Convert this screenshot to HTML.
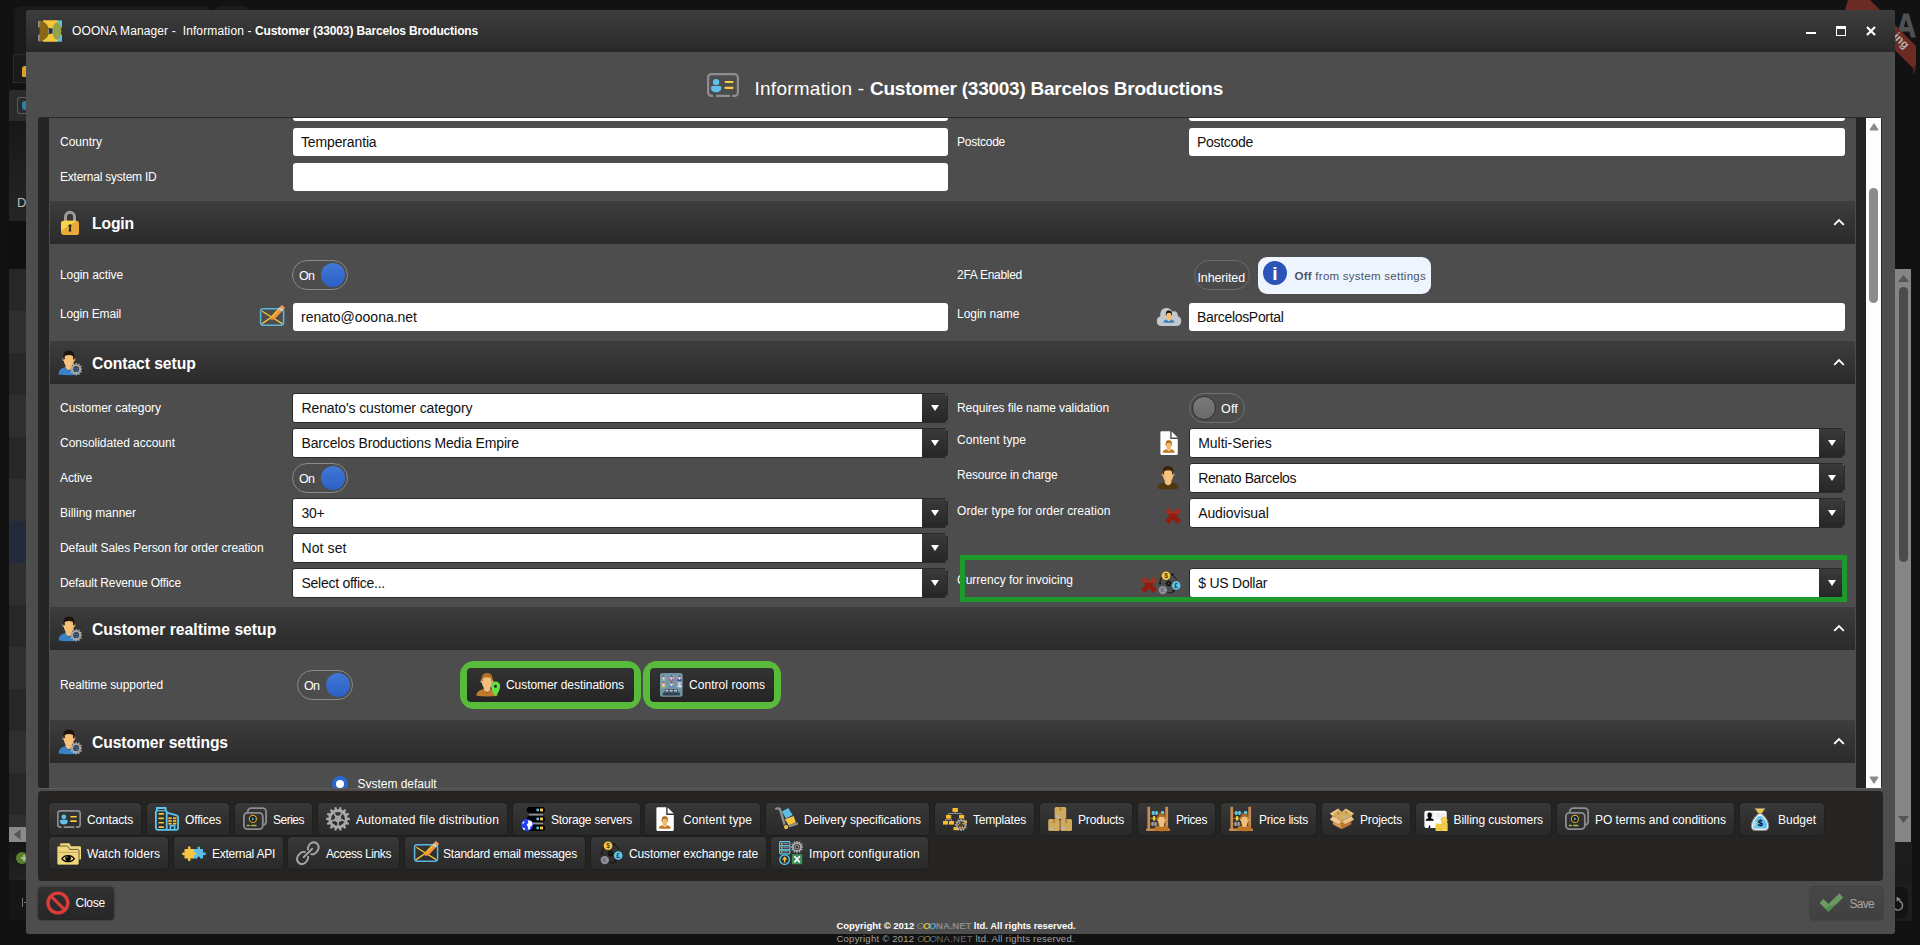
<!DOCTYPE html>
<html lang="en"><head><meta charset="utf-8"><title>OOONA Manager - Information - Customer (33003) Barcelos Broductions</title>
<style>
html,body{margin:0;padding:0;}
body{width:1920px;height:945px;overflow:hidden;background:#131313;font-family:"Liberation Sans", sans-serif;color:#fff;position:relative;}
body div, body svg{position:absolute;box-sizing:border-box;}
.t{white-space:pre;line-height:1;}

.hdr{background:linear-gradient(#3d3d3d,#2a2a2a);}
.inp{background:#fff;border-radius:3px;}
.dd{background:#fff;border-radius:3px;border:1px solid #2b2b2b;overflow:hidden;}
.dd i{position:absolute;right:0;top:0;bottom:0;width:25px;background:linear-gradient(#3a3a3a,#262626);}
.dd i:after{content:"";position:absolute;left:9px;top:11px;border-left:4px solid transparent;border-right:4px solid transparent;border-top:6px solid #fff;}
.tg{border:1px solid #8a8a8a;border-radius:15px;background:#4c4c4c;}
.tb{background:linear-gradient(#383838,#292929);border-radius:4px;box-shadow:0 0 2px rgba(0,0,0,.5);}

</style></head><body>
<div style="left:0px;top:0px;width:1920px;height:945px;background:#121212;"></div>
<div style="left:14px;top:6px;width:197px;height:48px;background:#1a1a1a;border-radius:7px 7px 0 0;"></div>
<div style="left:214px;top:6px;width:36px;height:12px;background:#1b1b1b;border-radius:7px 7px 0 0;"></div>
<div style="left:13px;top:54px;width:14px;height:29px;background:#1b1b1b;border:1px solid #2a2a2a;"></div>
<div style="left:22px;top:66px;width:5px;height:11px;background:#d9a32b;border-radius:3px 0 0 1px;"></div>
<div style="left:9px;top:90px;width:18px;height:31px;background:#2b2b2b;border-radius:3px 0 0 0;"></div>
<div style="left:17px;top:97px;width:10px;height:17px;border:1.5px solid #5c5c5c;border-right:none;border-radius:3px 0 0 3px;"></div>
<div style="left:22px;top:101px;width:5px;height:9px;background:#2f7ea3;border-radius:3px 0 0 3px;"></div>
<div style="left:9px;top:121px;width:18px;height:100px;background:linear-gradient(#181818,#252525);"></div>
<div class="t" style="left:17px;top:196.00px;font-size:13px;color:#bbb;">D</div>
<div style="left:9px;top:221px;width:18px;height:48px;background:#101010;"></div>
<div style="left:9px;top:269px;width:18px;height:42px;background:#272727;"></div>
<div style="left:9px;top:311px;width:18px;height:42px;background:#2f2f2f;"></div>
<div style="left:9px;top:353px;width:18px;height:42px;background:#272727;"></div>
<div style="left:9px;top:395px;width:18px;height:42px;background:#2f2f2f;"></div>
<div style="left:9px;top:437px;width:18px;height:42px;background:#272727;"></div>
<div style="left:9px;top:479px;width:18px;height:42px;background:#2f2f2f;"></div>
<div style="left:9px;top:521px;width:18px;height:42px;background:#232a3a;"></div>
<div style="left:9px;top:563px;width:18px;height:42px;background:#2f2f2f;"></div>
<div style="left:9px;top:605px;width:18px;height:42px;background:#272727;"></div>
<div style="left:9px;top:647px;width:18px;height:42px;background:#2f2f2f;"></div>
<div style="left:9px;top:689px;width:18px;height:42px;background:#272727;"></div>
<div style="left:9px;top:731px;width:18px;height:42px;background:#2f2f2f;"></div>
<div style="left:9px;top:773px;width:18px;height:42px;background:#272727;"></div>
<div style="left:9px;top:815px;width:18px;height:12px;background:#2f2f2f;"></div>
<div style="left:9px;top:827px;width:17px;height:15px;background:#8a8a8a;"></div>
<svg style="left:13px;top:829px" width="8" height="11"><path d="M7.5 0.5L0.8 5.5L7.5 10.5Z" fill="#555"/></svg>
<div style="left:9px;top:842px;width:18px;height:38px;background:linear-gradient(#151515,#222);"></div>
<div style="left:16px;top:852px;width:12px;height:12px;background:#5c7f2c;border-radius:6px;"></div>
<div style="left:21px;top:857.2px;width:6px;height:1.6px;background:#a9b99a;"></div>
<div style="left:23.2px;top:855px;width:1.6px;height:6px;background:#a9b99a;"></div>
<div style="left:9px;top:880px;width:18px;height:40px;background:#161616;"></div>
<div style="left:22px;top:898px;width:1.2px;height:9px;background:#777;"></div>
<div style="left:23.5px;top:902px;width:3px;height:1.2px;background:#777;"></div>
<div style="left:0px;top:934px;width:1920px;height:11px;background:#121212;"></div>
<div class="t" style="left:1895.5px;top:8.87px;font-size:33px;font-weight:700;color:#4f5153;-webkit-text-stroke:0.9px #4f5153;transform:scaleX(0.84);transform-origin:0 0;">A</div>
<svg style="left:1840px;top:0" width="80" height="80"><path d="M8 0H30L76 46V70L73 74V68.3L15 10H5Z" fill="#6b2b22"/><path d="M73 68.3L76 64V70L73 74Z" fill="#4f1d16"/></svg>
<div class="t" style="left:1892px;top:28.27px;font-size:11.5px;font-weight:700;color:#b4b4b4;transform:rotate(45deg);transform-origin:0 84.65%;">ing</div>
<div style="left:1895.3px;top:269px;width:15.5px;height:573px;background:#858585;"></div>
<div style="left:1898.6px;top:287px;width:9px;height:275px;background:#4b4b4b;border-radius:5px;"></div>
<svg style="left:1897.6px;top:275px" width="11" height="7"><path d="M0 7L5.5 0L11 7Z" fill="#555"/></svg>
<svg style="left:1897.6px;top:816px" width="11" height="7"><path d="M0 0L5.5 7L11 0Z" fill="#555"/></svg>
<div style="left:1894px;top:842px;width:17.5px;height:79px;background:linear-gradient(#1e1e1e,#171717);"></div>
<div style="left:1894px;top:882px;width:17.5px;height:39px;background:#1d1d1d;"></div>
<div style="left:1894px;top:887px;width:14px;height:31px;background:#131313;border-radius:0 6px 6px 0;"></div>
<svg style="left:1890px;top:892px" width="20" height="22" viewBox="0 0 20 22"><path d="M9 9A4.6 4.6 0 1 1 3.6 12" fill="none" stroke="#8c8c8c" stroke-width="1.4"/><path d="M6.6 4.8V9.6L11 7.2Z" fill="#8c8c8c"/></svg>
<div style="left:25.5px;top:10.3px;width:1869px;height:923.7px;background:#4d4d4d;border-radius:3px;"></div>
<div style="left:25.5px;top:10.3px;width:1869px;height:41.7px;background:linear-gradient(#3d3d3d,#292929);border-radius:3px 3px 0 0;"></div>
<svg style="left:38px;top:20px" width="24" height="22" viewBox="0 0 24 22"><rect x="0" y="1" width="4" height="6.5" fill="#8b8d92"/><rect x="0" y="14.5" width="5.5" height="6.7" fill="#8b8d92"/><rect x="17.5" y="0.4" width="6.5" height="7.2" fill="#56c1ea"/><rect x="17.5" y="14.4" width="6.5" height="7.2" fill="#56c1ea"/><path d="M5 0.3H19Q22.5 5 22.8 11Q22.5 17 19 21.7H5Z" fill="#f6c63f"/><path d="M1.6 0.3Q11 3 11.2 11Q11 19 1.6 21.7Z" fill="#8a6914"/><path d="M14.6 7.6Q12.2 11 14.6 14.4Q16 11 14.6 7.6Z" fill="#56c1ea"/><ellipse cx="18.9" cy="11" rx="4.4" ry="8.8" fill="#95a349"/><rect x="9.4" y="8.2" width="5" height="5.6" rx="1" fill="#2e2e2e"/><rect x="9.4" y="8.6" width="1.6" height="4.8" fill="#8b8d92"/></svg>
<div class="t" style="left:72px;top:24.64px;font-size:12px;letter-spacing:0.116px;">OOONA Manager -  Information - </div>
<div class="t" style="left:255px;top:24.64px;font-size:12px;font-weight:700;letter-spacing:-0.155px;">Customer (33003) Barcelos Broductions</div>
<div style="left:1806px;top:31.7px;width:10px;height:2.6px;background:#fff;"></div>
<div style="left:1836px;top:26px;width:10px;height:10px;border:1px solid #fff;border-top:3px solid #fff;"></div>
<svg style="left:1866px;top:26px" width="10" height="10"><path d="M1 1L9 9M9 1L1 9" stroke="#fff" stroke-width="2.2"/></svg>
<svg style="left:707px;top:73px" width="32" height="24" viewBox="0 0 32 24"><path d="M6 22.9H4.6A3.5 3.5 0 0 1 1.1 19.4V4.6A3.5 3.5 0 0 1 4.6 1.1H27.4A3.5 3.5 0 0 1 30.9 4.6V19.4A3.5 3.5 0 0 1 27.4 22.9H25.2M23 22.9H9" fill="none" stroke="#8d8e93" stroke-width="2.2"/><circle cx="9.1" cy="9.1" r="3.2" fill="#5fc1e8"/><path d="M3.9 14.6Q3.9 13 5.5 13H12.7Q14.3 13 14.3 14.6Q14.3 19.3 9.1 19.3Q3.9 19.3 3.9 14.6Z" fill="#5fc1e8"/><rect x="17.8" y="7.9" width="8.5" height="2.2" rx="0.4" fill="#fccb45"/><rect x="17.8" y="13.8" width="8.5" height="2.2" rx="0.4" fill="#fccb45"/></svg>
<div class="t" style="left:754.5px;top:78.92px;font-size:19px;letter-spacing:0.254px;">Information - </div>
<div class="t" style="left:870px;top:78.92px;font-size:19px;font-weight:700;letter-spacing:-0.248px;">Customer (33003) Barcelos Broductions</div>
<div style="left:38px;top:117px;width:1844px;height:671px;background:#2a2a2a;border-radius:3px;"></div>
<div style="left:38px;top:117.7px;width:11px;height:670.3px;background:#272524;border-radius:3px 0 0 3px;"></div>
<div style="left:49px;top:117.7px;width:1807px;height:670.3px;background:#4d4d4d;"></div>
<div style="left:1856px;top:117.7px;width:9.8px;height:670.3px;background:#252423;"></div>
<div style="left:1865.7px;top:117.7px;width:15.5px;height:670.3px;background:#fdfdfd;"></div>
<div style="left:1869.3px;top:188px;width:8.6px;height:115px;background:#8c8c8c;border-radius:4.3px;"></div>
<svg style="left:1868.5px;top:122.5px" width="10" height="8" viewBox="0 0 10 8"><path d="M1.3 6.8L5 1.2L8.7 6.8Z" fill="#8a8a8a" stroke="#8a8a8a" stroke-width="1.4" stroke-linejoin="round"/></svg>
<svg style="left:1868.5px;top:775.5px" width="10" height="8" viewBox="0 0 10 8"><path d="M1.3 1.2L5 6.8L8.7 1.2Z" fill="#8a8a8a" stroke="#8a8a8a" stroke-width="1.4" stroke-linejoin="round"/></svg>
<div style="left:293px;top:118px;width:655px;height:3px;background:#fff;border-radius:0 0 3px 3px;"></div>
<div style="left:1189px;top:118px;width:656px;height:3px;background:#fff;border-radius:0 0 3px 3px;"></div>
<div class="t" style="left:60px;top:136.04px;font-size:12px;letter-spacing:-0.004px;">Country</div>
<div style="left:293px;top:128px;width:655px;height:28px;background:#fff;border-radius:3px;"></div>
<div class="t" style="left:301px;top:134.75px;font-size:14px;color:#111;letter-spacing:-0.141px;">Temperantia</div>
<div class="t" style="left:957px;top:136.04px;font-size:12px;letter-spacing:-0.256px;">Postcode</div>
<div style="left:1189px;top:128px;width:656px;height:28px;background:#fff;border-radius:3px;"></div>
<div class="t" style="left:1197px;top:134.75px;font-size:14px;color:#111;letter-spacing:-0.297px;">Postcode</div>
<div class="t" style="left:60px;top:170.54px;font-size:12px;letter-spacing:-0.234px;">External system ID</div>
<div style="left:293px;top:163px;width:655px;height:28px;background:#fff;border-radius:3px;"></div>
<div class="hdr" style="left:50px;top:201px;width:1805px;height:43px"></div>
<svg style="left:58px;top:209px" width="24" height="28" viewBox="0 0 24 28"><path d="M7.5 13V7.8A4.5 4.5 0 0 1 16.5 7.8V13" fill="none" stroke="#9b9b9b" stroke-width="3"/><rect x="3" y="11.8" width="18" height="14.3" rx="3" fill="#eba937"/><path d="M3 21.5V14.8A3 3 0 0 1 6 11.8H18.5Z" fill="#f6d549"/><path d="M5.5 26.1H18A3 3 0 0 0 21 23.1V15Z" fill="#eba937"/><circle cx="12" cy="16.8" r="1.6" fill="#2d2a22"/><path d="M11.3 17H12.7L13.3 22.6H10.7Z" fill="#2d2a22"/></svg>
<div class="t" style="left:92px;top:215.81px;font-size:15.7px;font-weight:700;letter-spacing:-0.141px;">Login</div>
<svg style="left:1833px;top:218px" width="12" height="8" viewBox="0 0 12 8"><path d="M1.2 6.8L6 2L10.8 6.8" fill="none" stroke="#fff" stroke-width="1.9"/></svg>
<div class="t" style="left:60px;top:268.54px;font-size:12px;letter-spacing:-0.087px;">Login active</div>
<div class="tg" style="left:292px;top:260px;width:56px;height:30px"></div>
<div style="left:321px;top:263px;width:24px;height:24px;background:linear-gradient(#4079d4,#2b5fc6);border-radius:12px;"></div>
<div class="t" style="left:299px;top:269.62px;font-size:12.5px;letter-spacing:-0.844px;">On</div>
<div class="t" style="left:957px;top:268.54px;font-size:12px;letter-spacing:-0.278px;">2FA Enabled</div>
<div class="tg" style="left:1194px;top:260px;width:56px;height:30px;background:#4a4a4a;border-color:#6c6c6c"></div>
<div class="t" style="left:1197.5px;top:272.22px;font-size:12.5px;letter-spacing:-0.128px;">Inherited</div>
<div style="left:1258px;top:257px;width:173px;height:37px;background:#eff5fe;border-radius:9px;"></div>
<div style="left:1263px;top:261px;width:24px;height:24px;background:#2b54b9;border-radius:12px;"></div>
<div class="t" style="left:1272.3px;top:263.92px;font-size:19px;font-weight:700;">i</div>
<div class="t" style="left:1294.5px;top:270.97px;font-size:11.5px;color:#4a5368;letter-spacing:0.260px;"><b>Off</b> from system settings</div>
<div class="t" style="left:60px;top:308.04px;font-size:12px;letter-spacing:-0.155px;">Login Email</div>
<svg style="left:259px;top:304px" width="26" height="22" viewBox="0 0 26 22"><rect x="1.6" y="4.8" width="23" height="16.4" rx="2.6" fill="none" stroke="#5bb5da" stroke-width="1.6"/><path d="M3.2 7.2L23.2 19.6M3.2 19.6L12.2 13.4" fill="none" stroke="#f1c232" stroke-width="1.35"/><path d="M11.9 15.9L12.27 12.13L19.22 4.68L22.58 7.82L15.63 15.27Z" fill="#f5913a"/><path d="M12.27 12.13L19.22 4.68L20.4 5.78L13.45 13.23Z" fill="#efc22f"/><path d="M19.22 4.68L21.12 2.63L24.48 5.77L22.58 7.82Z" fill="#cfcfcf"/><path d="M21.12 2.63L22.1 1.6Q22.9 0.9 23.7 1.6L25.5 3.3Q26.2 4.1 25.5 4.8L24.48 5.77Z" fill="#f79a4a"/></svg>
<div style="left:293px;top:303px;width:655px;height:28px;background:#fff;border-radius:3px;"></div>
<div class="t" style="left:301px;top:309.75px;font-size:14px;color:#111;letter-spacing:-0.013px;">renato@ooona.net</div>
<div class="t" style="left:957px;top:308.04px;font-size:12px;letter-spacing:-0.022px;">Login name</div>
<svg style="left:1156px;top:307px" width="26" height="20" viewBox="0 0 26 20"><path d="M5.6 19Q0.8 19 0.8 14.2Q0.8 10.4 4.2 9.6Q3.6 0.9 10.5 0.9Q14.6 0.9 16 4.6Q21.6 2.6 22 9.2Q25.2 10 25.2 14.2Q25.2 19 20.4 19Z" fill="#c4c8cc"/><path fill="#3a82c8" d="M7.3 15.6Q7.3 13.37 10.55 12.53L12.9 14.54L15.25 12.53Q18.5 13.37 18.5 15.6Q12.9 16.5 7.3 15.6Z"/><path fill="#f4c07c" d="M11.05 10.12H14.75V12.86Q12.9 15.44 11.05 12.86Z"/><ellipse cx="9.99" cy="8.05" rx="0.62" ry="1.06" fill="#f4c07c"/><ellipse cx="15.81" cy="8.05" rx="0.62" ry="1.06" fill="#f4c07c"/><path fill="#f4c07c" d="M10.1 5.64H15.7V8.44Q15.7 10.96 14.02 12.08H11.78Q10.1 10.96 10.1 8.44Z"/><path fill="#17110b" d="M9.82 8.44Q9.26 3.34 12.9 3.4Q16.54 3.34 15.98 8.44L15.14 7.99L15.2 6.42Q12.9 5.25 10.6 6.42L10.66 7.99Z"/></svg>
<div style="left:1189px;top:303px;width:656px;height:28px;background:#fff;border-radius:3px;"></div>
<div class="t" style="left:1197px;top:309.75px;font-size:14px;color:#111;letter-spacing:-0.325px;">BarcelosPortal</div>
<div class="hdr" style="left:50px;top:341px;width:1805px;height:43px"></div>
<svg style="left:58px;top:349px" width="24" height="28" viewBox="0 0 24 28"><path fill="#3a82c8" d="M0.6 25.4Q0.6 19.76 6.62 18.23L10.9 21.9L15.18 18.23Q21.2 19.76 21.2 25.4Q10.9 27.03 0.6 25.4Z"/><path fill="#f4c07c" d="M7.53 13.84H14.27V18.84Q10.9 23.53 7.53 18.84Z"/><ellipse cx="5.6" cy="10.07" rx="1.12" ry="1.94" fill="#f4c07c"/><ellipse cx="16.2" cy="10.07" rx="1.12" ry="1.94" fill="#f4c07c"/><path fill="#f4c07c" d="M5.8 5.68H16V10.78Q16 15.37 12.94 17.41H8.86Q5.8 15.37 5.8 10.78Z"/><path fill="#1c140d" d="M5.29 10.78Q4.27 1.5 10.9 1.6Q17.53 1.5 16.51 10.78L14.98 9.96L15.08 7.11Q10.9 4.97 6.72 7.11L6.82 9.96Z"/><path fill-rule="evenodd" fill="#a9a9a9" d="M23.05 19.47 L24.47 19.57 L24.47 20.83 L23.05 20.93 L22.76 21.99 L23.94 22.79 L23.31 23.88 L22.03 23.26 L21.26 24.03 L21.88 25.31 L20.79 25.94 L19.99 24.76 L18.93 25.05 L18.83 26.47 L17.57 26.47 L17.47 25.05 L16.41 24.76 L15.61 25.94 L14.52 25.31 L15.14 24.03 L14.37 23.26 L13.09 23.88 L12.46 22.79 L13.64 21.99 L13.35 20.93 L11.93 20.83 L11.93 19.57 L13.35 19.47 L13.64 18.41 L12.46 17.61 L13.09 16.52 L14.37 17.14 L15.14 16.37 L14.52 15.09 L15.61 14.46 L16.41 15.64 L17.47 15.35 L17.57 13.93 L18.83 13.93 L18.93 15.35 L19.99 15.64 L20.79 14.46 L21.88 15.09 L21.26 16.37 L22.03 17.14 L23.31 16.52 L23.94 17.61 L22.76 18.41ZM15.3 20.2a2.9 2.9 0 1 0 5.8 0a2.9 2.9 0 1 0 -5.8 0Z"/><circle cx="18.2" cy="20.2" r="2.9" fill="#3a3f46"/><circle cx="17" cy="19.2" r="0.8" fill="#3a82c8"/><circle cx="19.5" cy="19.4" r="0.8" fill="#3a82c8"/><circle cx="18" cy="21.6" r="0.8" fill="#3a82c8"/><circle cx="19.8" cy="21.4" r="0.7" fill="#3a82c8"/></svg>
<div class="t" style="left:92px;top:355.81px;font-size:15.7px;font-weight:700;letter-spacing:-0.069px;">Contact setup</div>
<svg style="left:1833px;top:358px" width="12" height="8" viewBox="0 0 12 8"><path d="M1.2 6.8L6 2L10.8 6.8" fill="none" stroke="#fff" stroke-width="1.9"/></svg>
<div class="t" style="left:60px;top:401.54px;font-size:12px;letter-spacing:-0.022px;">Customer category</div>
<div class="dd" style="left:292px;top:393.0px;width:656.4px;height:29.5px"><i></i></div>
<div class="t" style="left:301.5px;top:400.75px;font-size:14px;color:#111;letter-spacing:-0.111px;">Renato's customer category</div>
<div class="t" style="left:60px;top:436.54px;font-size:12px;letter-spacing:-0.021px;">Consolidated account</div>
<div class="dd" style="left:292px;top:428.0px;width:656.4px;height:29.5px"><i></i></div>
<div class="t" style="left:301.5px;top:435.75px;font-size:14px;color:#111;letter-spacing:-0.153px;">Barcelos Broductions Media Empire</div>
<div class="t" style="left:60px;top:471.54px;font-size:12px;letter-spacing:-0.115px;">Active</div>
<div class="tg" style="left:292px;top:463px;width:56px;height:30px"></div>
<div style="left:321px;top:466px;width:24px;height:24px;background:linear-gradient(#4079d4,#2b5fc6);border-radius:12px;"></div>
<div class="t" style="left:299px;top:472.62px;font-size:12.5px;letter-spacing:-0.844px;">On</div>
<div class="t" style="left:60px;top:506.54px;font-size:12px;letter-spacing:-0.003px;">Billing manner</div>
<div class="dd" style="left:292px;top:498.0px;width:656.4px;height:29.5px"><i></i></div>
<div class="t" style="left:301.5px;top:505.75px;font-size:14px;color:#111;letter-spacing:-0.250px;">30+</div>
<div class="t" style="left:60px;top:541.54px;font-size:12px;letter-spacing:-0.101px;">Default Sales Person for order creation</div>
<div class="dd" style="left:292px;top:533.0px;width:656.4px;height:29.5px"><i></i></div>
<div class="t" style="left:301.5px;top:540.75px;font-size:14px;color:#111;letter-spacing:0.092px;">Not set</div>
<div class="t" style="left:60px;top:576.54px;font-size:12px;letter-spacing:-0.130px;">Default Revenue Office</div>
<div class="dd" style="left:292px;top:568.0px;width:656.4px;height:29.5px"><i></i></div>
<div class="t" style="left:301.5px;top:575.75px;font-size:14px;color:#111;letter-spacing:-0.262px;">Select office...</div>
<div class="t" style="left:957px;top:401.54px;font-size:12px;letter-spacing:-0.072px;">Requires file name validation</div>
<div class="tg" style="left:1189px;top:393px;width:56px;height:30px;border-color:#727272"></div>
<div style="left:1192px;top:396px;width:24px;height:24px;background:linear-gradient(#7a7a7a,#6a6a6a);border-radius:12px;border:1px solid #323232;"></div>
<div class="t" style="left:1221px;top:402.72px;font-size:12.5px;letter-spacing:0.182px;">Off</div>
<div class="t" style="left:957px;top:433.54px;font-size:12px;letter-spacing:0.079px;">Content type</div>
<svg style="left:1160px;top:431px" width="18" height="24" viewBox="0 0 18 24"><path d="M0.4 1.4Q0.4 0.3 1.5 0.3H10.2V7.9H17.8V22.8Q17.8 23.9 16.7 23.9H1.5Q0.4 23.9 0.4 22.8Z" fill="#fff"/><path d="M11.6 0.4L17.7 6.6H11.6Z" fill="#fff"/><path fill="#c17623" d="M2.8 21.4Q2.8 19.17 6.45 18.33L8.8 20.34L11.15 18.33Q14.8 19.17 14.8 21.4Q8.8 22.3 2.8 21.4Z"/><path fill="#f2ba70" d="M6.95 15.92H10.65V18.66Q8.8 21.24 6.95 18.66Z"/><ellipse cx="5.89" cy="13.85" rx="0.62" ry="1.06" fill="#f2ba70"/><ellipse cx="11.71" cy="13.85" rx="0.62" ry="1.06" fill="#f2ba70"/><path fill="#f2ba70" d="M6 11.44H11.6V14.24Q11.6 16.76 9.92 17.88H7.68Q6 16.76 6 14.24Z"/><path fill="#a9681f" d="M5.72 14.24Q5.16 9.14 8.8 9.2Q12.44 9.14 11.88 14.24L11.04 13.79L11.1 12.22Q8.8 11.05 6.5 12.22L6.56 13.79Z"/></svg>
<div class="dd" style="left:1188.7px;top:428.0px;width:656.3px;height:29.5px"><i></i></div>
<div class="t" style="left:1198.2px;top:435.75px;font-size:14px;color:#111;letter-spacing:-0.034px;">Multi-Series</div>
<div class="t" style="left:957px;top:468.54px;font-size:12px;letter-spacing:-0.198px;">Resource in charge</div>
<svg style="left:1157px;top:465px" width="24" height="26" viewBox="0 0 24 26"><path fill="#4f370f" d="M0.5 23.6Q0.5 18.8 6.9 17.3L11.1 20.9L15.3 17.3Q21.7 18.8 21.7 23.6Q11.1 25.2 0.5 23.6Z"/><path fill="#f4c07c" d="M7.8 13H14.4V17.9Q11.1 22.5 7.8 17.9Z"/><ellipse cx="5.9" cy="9.3" rx="1.1" ry="1.9" fill="#f4c07c"/><ellipse cx="16.3" cy="9.3" rx="1.1" ry="1.9" fill="#f4c07c"/><path fill="#f4c07c" d="M6.1 5H16.1V10Q16.1 14.5 13.1 16.5H9.1Q6.1 14.5 6.1 10Z"/><path fill="#3a2308" d="M5.6 10Q4.6 0.9 11.1 1Q17.6 0.9 16.6 10L15.1 9.2L15.2 6.4Q11.1 4.3 7 6.4L7.1 9.2Z"/></svg>
<div class="dd" style="left:1188.7px;top:463.0px;width:656.3px;height:29.5px"><i></i></div>
<div class="t" style="left:1198.2px;top:470.75px;font-size:14px;color:#111;letter-spacing:-0.368px;">Renato Barcelos</div>
<div class="t" style="left:957px;top:505.14px;font-size:12px;letter-spacing:0.072px;">Order type for order creation</div>
<svg style="left:1165px;top:508px" width="16" height="16" viewBox="0 0 16 16"><path d="M3.6 0L8 4.4L12.4 0L16 3.6L11.6 8L16 12.4L12.4 16L8 11.6L3.6 16L0 12.4L4.4 8L0 3.6Z" fill="#931b10"/><path d="M3.6 0L8 4.4L12.4 0L16 3.6L13.4 6.2Q7 5 2.6 6.2L0 3.6Z" fill="#a03125"/></svg>
<div class="dd" style="left:1188.7px;top:498.0px;width:656.3px;height:29.5px"><i></i></div>
<div class="t" style="left:1198.2px;top:505.75px;font-size:14px;color:#111;letter-spacing:-0.101px;">Audiovisual</div>
<div class="t" style="left:957px;top:573.54px;font-size:12px;letter-spacing:-0.002px;">Currency for invoicing</div>
<svg style="left:1141px;top:577px" width="16" height="16" viewBox="0 0 16 16"><path d="M3.6 0L8 4.4L12.4 0L16 3.6L11.6 8L16 12.4L12.4 16L8 11.6L3.6 16L0 12.4L4.4 8L0 3.6Z" fill="#931b10"/><path d="M3.6 0L8 4.4L12.4 0L16 3.6L13.4 6.2Q7 5 2.6 6.2L0 3.6Z" fill="#a03125"/></svg>
<svg style="left:1158px;top:571px" width="24" height="24" viewBox="0 0 24 24"><path d="M4.2 5.6Q1.6 8.6 1.9 12.4" fill="none" stroke="#111" stroke-width="0.9"/><path d="M0.6 11.6L3.3 11.9L2 14.2Z" fill="#111"/><path d="M13.8 3.6Q16.9 5.3 18.6 8.6" fill="none" stroke="#111" stroke-width="0.9"/><path d="M12.9 2.3L15.8 2.8L14 5.2Z" fill="#111"/><path d="M9.6 21.7Q13 22.6 15.6 20.4" fill="none" stroke="#111" stroke-width="0.9"/><path d="M14.3 18.7L17.1 19.6L15.7 22Z" fill="#111"/><path fill-rule="evenodd" fill="#0c0c0c" d="M12.84 11.99 L13.66 12.03 L13.66 12.97 L12.84 13.01 L12.55 13.72 L13.1 14.34 L12.44 15 L11.82 14.45 L11.11 14.74 L11.07 15.56 L10.13 15.56 L10.09 14.74 L9.38 14.45 L8.76 15 L8.1 14.34 L8.65 13.72 L8.36 13.01 L7.54 12.97 L7.54 12.03 L8.36 11.99 L8.65 11.28 L8.1 10.66 L8.76 10 L9.38 10.55 L10.09 10.26 L10.13 9.44 L11.07 9.44 L11.11 10.26 L11.82 10.55 L12.44 10 L13.1 10.66 L12.55 11.28ZM9.6 12.5a1 1 0 1 0 2 0a1 1 0 1 0 -2 0Z"/><circle cx="8" cy="4.7" r="4.3" fill="#fccb45"/><text x="8" y="7.1" font-size="6.6" font-weight="700" text-anchor="middle" fill="#4a3a08" font-family="Liberation Sans, sans-serif">$</text><circle cx="18.2" cy="14.5" r="4.3" fill="#62c6ef"/><text x="18.2" y="17" font-size="6.8" font-weight="700" text-anchor="middle" fill="#163848" font-family="Liberation Sans, sans-serif">£</text><circle cx="4.8" cy="19.1" r="4.2" fill="#8f9196"/><text x="4.6" y="21.3" font-size="6.2" font-weight="700" text-anchor="middle" fill="#63656a" font-family="Liberation Sans, sans-serif">€</text></svg>
<div class="dd" style="left:1188.7px;top:568.0px;width:656.3px;height:29.5px"><i></i></div>
<div class="t" style="left:1198.2px;top:575.75px;font-size:14px;color:#111;letter-spacing:-0.236px;">$ US Dollar</div>
<div style="left:960px;top:555px;width:887px;height:47px;border:5px solid #1e9a2d;"></div>
<div class="hdr" style="left:50px;top:607px;width:1805px;height:43px"></div>
<svg style="left:58px;top:615px" width="24" height="28" viewBox="0 0 24 28"><path fill="#3a82c8" d="M0.6 25.4Q0.6 19.76 6.62 18.23L10.9 21.9L15.18 18.23Q21.2 19.76 21.2 25.4Q10.9 27.03 0.6 25.4Z"/><path fill="#f4c07c" d="M7.53 13.84H14.27V18.84Q10.9 23.53 7.53 18.84Z"/><ellipse cx="5.6" cy="10.07" rx="1.12" ry="1.94" fill="#f4c07c"/><ellipse cx="16.2" cy="10.07" rx="1.12" ry="1.94" fill="#f4c07c"/><path fill="#f4c07c" d="M5.8 5.68H16V10.78Q16 15.37 12.94 17.41H8.86Q5.8 15.37 5.8 10.78Z"/><path fill="#1c140d" d="M5.29 10.78Q4.27 1.5 10.9 1.6Q17.53 1.5 16.51 10.78L14.98 9.96L15.08 7.11Q10.9 4.97 6.72 7.11L6.82 9.96Z"/><path fill-rule="evenodd" fill="#a9a9a9" d="M23.05 19.47 L24.47 19.57 L24.47 20.83 L23.05 20.93 L22.76 21.99 L23.94 22.79 L23.31 23.88 L22.03 23.26 L21.26 24.03 L21.88 25.31 L20.79 25.94 L19.99 24.76 L18.93 25.05 L18.83 26.47 L17.57 26.47 L17.47 25.05 L16.41 24.76 L15.61 25.94 L14.52 25.31 L15.14 24.03 L14.37 23.26 L13.09 23.88 L12.46 22.79 L13.64 21.99 L13.35 20.93 L11.93 20.83 L11.93 19.57 L13.35 19.47 L13.64 18.41 L12.46 17.61 L13.09 16.52 L14.37 17.14 L15.14 16.37 L14.52 15.09 L15.61 14.46 L16.41 15.64 L17.47 15.35 L17.57 13.93 L18.83 13.93 L18.93 15.35 L19.99 15.64 L20.79 14.46 L21.88 15.09 L21.26 16.37 L22.03 17.14 L23.31 16.52 L23.94 17.61 L22.76 18.41ZM15.3 20.2a2.9 2.9 0 1 0 5.8 0a2.9 2.9 0 1 0 -5.8 0Z"/><circle cx="18.2" cy="20.2" r="2.9" fill="#3a3f46"/><circle cx="17" cy="19.2" r="0.8" fill="#3a82c8"/><circle cx="19.5" cy="19.4" r="0.8" fill="#3a82c8"/><circle cx="18" cy="21.6" r="0.8" fill="#3a82c8"/><circle cx="19.8" cy="21.4" r="0.7" fill="#3a82c8"/></svg>
<div class="t" style="left:92px;top:621.81px;font-size:15.7px;font-weight:700;letter-spacing:0.015px;">Customer realtime setup</div>
<svg style="left:1833px;top:624px" width="12" height="8" viewBox="0 0 12 8"><path d="M1.2 6.8L6 2L10.8 6.8" fill="none" stroke="#fff" stroke-width="1.9"/></svg>
<div class="t" style="left:60px;top:678.54px;font-size:12px;letter-spacing:-0.059px;">Realtime supported</div>
<div class="tg" style="left:297px;top:670px;width:56px;height:30px"></div>
<div style="left:326px;top:673px;width:24px;height:24px;background:linear-gradient(#4079d4,#2b5fc6);border-radius:12px;"></div>
<div class="t" style="left:304px;top:679.62px;font-size:12.5px;letter-spacing:-0.844px;">On</div>
<div style="left:460px;top:661px;width:181px;height:48px;background:#59bb3b;border-radius:14px;"></div>
<div style="left:467px;top:668px;width:167px;height:34px;background:linear-gradient(#333,#252525);border-radius:4px;"></div>
<svg style="left:476px;top:672px" width="24" height="26" viewBox="0 0 24 26"><path fill="#c27a2a" d="M0.4 23.8Q0.4 18.7 6.8 17.2L11 20.8L15.2 17.2Q21.6 18.7 21.6 23.8Q11 25.4 0.4 23.8Z"/><path fill="#f2be7c" d="M7.7 12.9H14.3V17.8Q11 22.4 7.7 17.8Z"/><ellipse cx="5.8" cy="9.2" rx="1.1" ry="1.9" fill="#f2be7c"/><ellipse cx="16.2" cy="9.2" rx="1.1" ry="1.9" fill="#f2be7c"/><path fill="#f2be7c" d="M6 4.9H16V9.9Q16 14.4 13 16.4H9Q6 14.4 6 9.9Z"/><path fill="#b27029" d="M5.5 9.9Q4.5 0.8 11 0.9Q17.5 0.8 16.5 9.9L15 9.1L15.1 6.3Q11 4.2 6.9 6.3L7 9.1Z"/><path fill-rule="evenodd" fill="#63e042" d="M19.5 24.6Q15 18 15 14.2A4.6 4.6 0 0 1 24.2 14.2Q24.2 18 19.5 24.6ZM17.95 14.2a1.55 1.55 0 1 0 3.1 0a1.55 1.55 0 1 0 -3.1 0Z"/></svg>
<div class="t" style="left:506px;top:679.34px;font-size:12px;letter-spacing:-0.066px;">Customer destinations</div>
<div style="left:643px;top:661px;width:138px;height:48px;background:#59bb3b;border-radius:14px;"></div>
<div style="left:650px;top:668px;width:124px;height:34px;background:linear-gradient(#333,#252525);border-radius:4px;"></div>
<svg style="left:659.9px;top:673.4px" width="23" height="24" viewBox="0 0 23 24"><rect x="0" y="0" width="22.6" height="23.7" rx="2.2" fill="#7296a1"/><rect x="0.9" y="2.2" width="5.3" height="5.6" fill="#8d99d9"/><path fill="#7fc08a" d="M1.25 7.5Q1.25 6.42 2.63 6.09L3.55 6.88L4.47 6.09Q5.85 6.42 5.85 7.5Q3.55 7.85 1.25 7.5Z"/><path fill="#f6d0a8" d="M2.82 5.14H4.28V6.22Q3.55 7.23 2.82 6.22Z"/><ellipse cx="2.41" cy="4.33" rx="0.24" ry="0.42" fill="#f6d0a8"/><ellipse cx="4.69" cy="4.33" rx="0.24" ry="0.42" fill="#f6d0a8"/><path fill="#f6d0a8" d="M2.45 3.38H4.65V4.48Q4.65 5.47 3.99 5.91H3.11Q2.45 5.47 2.45 4.48Z"/><path fill="#3a2a1a" d="M2.34 4.48Q2.12 2.48 3.55 2.5Q4.98 2.48 4.76 4.48L4.43 4.3L4.45 3.69Q3.55 3.23 2.65 3.69L2.67 4.3Z"/><rect x="8.9" y="2.2" width="5.3" height="5.6" fill="#8d99d9"/><path fill="#c03a7a" d="M9.25 7.5Q9.25 6.42 10.63 6.09L11.55 6.88L12.47 6.09Q13.85 6.42 13.85 7.5Q11.55 7.85 9.25 7.5Z"/><path fill="#f6d0a8" d="M10.82 5.14H12.28V6.22Q11.55 7.23 10.82 6.22Z"/><ellipse cx="10.41" cy="4.33" rx="0.24" ry="0.42" fill="#f6d0a8"/><ellipse cx="12.69" cy="4.33" rx="0.24" ry="0.42" fill="#f6d0a8"/><path fill="#f6d0a8" d="M10.45 3.38H12.65V4.48Q12.65 5.47 11.99 5.91H11.11Q10.45 5.47 10.45 4.48Z"/><path fill="#2a1a12" d="M10.34 4.48Q10.12 2.48 11.55 2.5Q12.98 2.48 12.76 4.48L12.43 4.3L12.45 3.69Q11.55 3.23 10.65 3.69L10.67 4.3Z"/><rect x="16.9" y="2.2" width="5.3" height="5.6" fill="#8d99d9"/><path fill="#1d2e8a" d="M17.25 7.5Q17.25 6.42 18.63 6.09L19.55 6.88L20.47 6.09Q21.85 6.42 21.85 7.5Q19.55 7.85 17.25 7.5Z"/><path fill="#f6d0a8" d="M18.82 5.14H20.28V6.22Q19.55 7.23 18.82 6.22Z"/><ellipse cx="18.41" cy="4.33" rx="0.24" ry="0.42" fill="#f6d0a8"/><ellipse cx="20.69" cy="4.33" rx="0.24" ry="0.42" fill="#f6d0a8"/><path fill="#f6d0a8" d="M18.45 3.38H20.65V4.48Q20.65 5.47 19.99 5.91H19.11Q18.45 5.47 18.45 4.48Z"/><path fill="#2a1a12" d="M18.34 4.48Q18.12 2.48 19.55 2.5Q20.98 2.48 20.76 4.48L20.43 4.3L20.45 3.69Q19.55 3.23 18.65 3.69L18.67 4.3Z"/><rect x="0.9" y="8.7" width="5.3" height="5.6" fill="#8d99d9"/><path fill="#c8d838" d="M1.25 14Q1.25 12.92 2.63 12.59L3.55 13.38L4.47 12.59Q5.85 12.92 5.85 14Q3.55 14.35 1.25 14Z"/><path fill="#f6d0a8" d="M2.82 11.64H4.28V12.72Q3.55 13.73 2.82 12.72Z"/><ellipse cx="2.41" cy="10.83" rx="0.24" ry="0.42" fill="#f6d0a8"/><ellipse cx="4.69" cy="10.83" rx="0.24" ry="0.42" fill="#f6d0a8"/><path fill="#f6d0a8" d="M2.45 9.88H4.65V10.98Q4.65 11.97 3.99 12.41H3.11Q2.45 11.97 2.45 10.98Z"/><path fill="#a04a1a" d="M2.34 10.98Q2.12 8.98 3.55 9Q4.98 8.98 4.76 10.98L4.43 10.8L4.45 10.19Q3.55 9.73 2.65 10.19L2.67 10.8Z"/><rect x="8.9" y="8.7" width="5.3" height="5.6" fill="#8d99d9"/><path fill="#3a82c8" d="M9.25 14Q9.25 12.92 10.63 12.59L11.55 13.38L12.47 12.59Q13.85 12.92 13.85 14Q11.55 14.35 9.25 14Z"/><path fill="#f6d0a8" d="M10.82 11.64H12.28V12.72Q11.55 13.73 10.82 12.72Z"/><ellipse cx="10.41" cy="10.83" rx="0.24" ry="0.42" fill="#f6d0a8"/><ellipse cx="12.69" cy="10.83" rx="0.24" ry="0.42" fill="#f6d0a8"/><path fill="#f6d0a8" d="M10.45 9.88H12.65V10.98Q12.65 11.97 11.99 12.41H11.11Q10.45 11.97 10.45 10.98Z"/><path fill="#4a2a12" d="M10.34 10.98Q10.12 8.98 11.55 9Q12.98 8.98 12.76 10.98L12.43 10.8L12.45 10.19Q11.55 9.73 10.65 10.19L10.67 10.8Z"/><rect x="16.9" y="8.7" width="5.3" height="5.6" fill="#8d99d9"/><path fill="#e8e8f0" d="M17.25 14Q17.25 12.92 18.63 12.59L19.55 13.38L20.47 12.59Q21.85 12.92 21.85 14Q19.55 14.35 17.25 14Z"/><path fill="#f6d0a8" d="M18.82 11.64H20.28V12.72Q19.55 13.73 18.82 12.72Z"/><ellipse cx="18.41" cy="10.83" rx="0.24" ry="0.42" fill="#f6d0a8"/><ellipse cx="20.69" cy="10.83" rx="0.24" ry="0.42" fill="#f6d0a8"/><path fill="#f6d0a8" d="M18.45 9.88H20.65V10.98Q20.65 11.97 19.99 12.41H19.11Q18.45 11.97 18.45 10.98Z"/><path fill="#d8c0a8" d="M18.34 10.98Q18.12 8.98 19.55 9Q20.98 8.98 20.76 10.98L20.43 10.8L20.45 10.19Q19.55 9.73 18.65 10.19L18.67 10.8Z"/><path d="M5.2 16H17.4L18.4 19.4H4.2Z" fill="#3c5064"/><rect x="2.8" y="19.4" width="17" height="3.2" rx="0.6" fill="#2f4155"/><rect x="5.6" y="16.8" width="2.7" height="1.7" fill="#c9ccd2"/><rect x="9.6" y="16.8" width="3.1" height="1.7" fill="#c9ccd2"/><rect x="14.1" y="16.8" width="2.9" height="1.7" fill="#c9ccd2"/></svg>
<div class="t" style="left:689px;top:679.34px;font-size:12px;letter-spacing:0.049px;">Control rooms</div>
<div class="hdr" style="left:50px;top:720px;width:1805px;height:43px"></div>
<svg style="left:58px;top:728px" width="24" height="28" viewBox="0 0 24 28"><path fill="#3a82c8" d="M0.6 25.4Q0.6 19.76 6.62 18.23L10.9 21.9L15.18 18.23Q21.2 19.76 21.2 25.4Q10.9 27.03 0.6 25.4Z"/><path fill="#f4c07c" d="M7.53 13.84H14.27V18.84Q10.9 23.53 7.53 18.84Z"/><ellipse cx="5.6" cy="10.07" rx="1.12" ry="1.94" fill="#f4c07c"/><ellipse cx="16.2" cy="10.07" rx="1.12" ry="1.94" fill="#f4c07c"/><path fill="#f4c07c" d="M5.8 5.68H16V10.78Q16 15.37 12.94 17.41H8.86Q5.8 15.37 5.8 10.78Z"/><path fill="#1c140d" d="M5.29 10.78Q4.27 1.5 10.9 1.6Q17.53 1.5 16.51 10.78L14.98 9.96L15.08 7.11Q10.9 4.97 6.72 7.11L6.82 9.96Z"/><path fill-rule="evenodd" fill="#a9a9a9" d="M23.05 19.47 L24.47 19.57 L24.47 20.83 L23.05 20.93 L22.76 21.99 L23.94 22.79 L23.31 23.88 L22.03 23.26 L21.26 24.03 L21.88 25.31 L20.79 25.94 L19.99 24.76 L18.93 25.05 L18.83 26.47 L17.57 26.47 L17.47 25.05 L16.41 24.76 L15.61 25.94 L14.52 25.31 L15.14 24.03 L14.37 23.26 L13.09 23.88 L12.46 22.79 L13.64 21.99 L13.35 20.93 L11.93 20.83 L11.93 19.57 L13.35 19.47 L13.64 18.41 L12.46 17.61 L13.09 16.52 L14.37 17.14 L15.14 16.37 L14.52 15.09 L15.61 14.46 L16.41 15.64 L17.47 15.35 L17.57 13.93 L18.83 13.93 L18.93 15.35 L19.99 15.64 L20.79 14.46 L21.88 15.09 L21.26 16.37 L22.03 17.14 L23.31 16.52 L23.94 17.61 L22.76 18.41ZM15.3 20.2a2.9 2.9 0 1 0 5.8 0a2.9 2.9 0 1 0 -5.8 0Z"/><circle cx="18.2" cy="20.2" r="2.9" fill="#3a3f46"/><circle cx="17" cy="19.2" r="0.8" fill="#3a82c8"/><circle cx="19.5" cy="19.4" r="0.8" fill="#3a82c8"/><circle cx="18" cy="21.6" r="0.8" fill="#3a82c8"/><circle cx="19.8" cy="21.4" r="0.7" fill="#3a82c8"/></svg>
<div class="t" style="left:92px;top:734.81px;font-size:15.7px;font-weight:700;letter-spacing:-0.102px;">Customer settings</div>
<svg style="left:1833px;top:737px" width="12" height="8" viewBox="0 0 12 8"><path d="M1.2 6.8L6 2L10.8 6.8" fill="none" stroke="#fff" stroke-width="1.9"/></svg>
<div style="left:50px;top:763px;width:1806px;height:25px;overflow:hidden"><div style="left:282px;top:13px;width:16px;height:16px;border-radius:8px;background:#2b65d1"></div><div style="left:286px;top:17px;width:8px;height:8px;border-radius:4px;background:#fff"></div><div class="t" style="left:307.5px;top:15.3px;font-size:12px;letter-spacing:-0.02px">System default</div></div>
<div style="left:38px;top:788px;width:1845px;height:1px;background:#5c5c5c;"></div>
<div style="left:38px;top:791px;width:1845px;height:89.6px;background:#252423;border-radius:4px;"></div>
<div class="tb" style="left:49px;top:803px;width:92px;height:32px"></div>
<svg style="left:57px;top:810px" width="24" height="18" viewBox="0 0 32 24"><path d="M6 22.9H4.6A3.5 3.5 0 0 1 1.1 19.4V4.6A3.5 3.5 0 0 1 4.6 1.1H27.4A3.5 3.5 0 0 1 30.9 4.6V19.4A3.5 3.5 0 0 1 27.4 22.9H25.2M23 22.9H9" fill="none" stroke="#8d8e93" stroke-width="2.2"/><circle cx="9.1" cy="9.1" r="3.2" fill="#5fc1e8"/><path d="M3.9 14.6Q3.9 13 5.5 13H12.7Q14.3 13 14.3 14.6Q14.3 19.3 9.1 19.3Q3.9 19.3 3.9 14.6Z" fill="#5fc1e8"/><rect x="17.8" y="7.9" width="8.5" height="2.2" rx="0.4" fill="#fccb45"/><rect x="17.8" y="13.8" width="8.5" height="2.2" rx="0.4" fill="#fccb45"/></svg>
<div class="t" style="left:87px;top:814.34px;font-size:12px;letter-spacing:-0.170px;">Contacts</div>
<div class="tb" style="left:147px;top:803px;width:82px;height:32px"></div>
<svg style="left:155px;top:807px" width="24" height="24" viewBox="0 0 24 24"><path d="M1.9 1H10.7V3.6L11.7 4.2V22.9H2.6Q0.9 22.4 0.9 20.8V4.2L1.9 3.6Z" fill="none" stroke="#5cc5ef" stroke-width="1.8" stroke-linejoin="round"/><path d="M1.9 3.7H10.7" stroke="#5cc5ef" stroke-width="1.2"/><path d="M11.7 5.7L21 8.1Q23.1 8.8 23.1 10.6V21Q23.1 22.9 21 22.9H11.7" fill="none" stroke="#5cc5ef" stroke-width="1.8" stroke-linejoin="round"/><path d="M15.4 22.9V18.6H19.6V22.9" fill="none" stroke="#5cc5ef" stroke-width="1.7"/><g fill="#f7c440"><rect x="3.3" y="6.1" width="5.8" height="1.7" rx="0.8"/><rect x="3.3" y="10.5" width="5.8" height="1.7" rx="0.8"/><rect x="3.3" y="14.9" width="5.8" height="1.7" rx="0.8"/><rect x="3.3" y="19.3" width="5.8" height="1.7" rx="0.8"/><rect x="13.3" y="10.4" width="3.4" height="1.7"/><rect x="18" y="10.4" width="3.4" height="1.7"/><rect x="13.3" y="13.1" width="3.4" height="1.7"/><rect x="18" y="13.1" width="3.4" height="1.7"/><rect x="13.3" y="15.8" width="3.4" height="1.7"/><rect x="18" y="15.8" width="3.4" height="1.7"/></g></svg>
<div class="t" style="left:185px;top:814.34px;font-size:12px;letter-spacing:-0.161px;">Offices</div>
<div class="tb" style="left:235px;top:803px;width:77px;height:32px"></div>
<svg style="left:243px;top:807px" width="24" height="24" viewBox="0 0 24 24"><path d="M4.7 5.6V4.7A3.6 3.6 0 0 1 8.3 1.1H19.5A3.6 3.6 0 0 1 23.1 4.7V14.6A3.6 3.6 0 0 1 20.3 18.1" fill="none" stroke="#8b8d91" stroke-width="1.8"/><rect x="0.9" y="5.9" width="18.9" height="16.2" rx="3.6" fill="none" stroke="#8b8d91" stroke-width="1.8"/><circle cx="9.9" cy="11.9" r="3.5" fill="#0d0d0d" stroke="#d4a12b" stroke-width="1.3"/><path d="M8.8 9.7L11.7 11.9L8.8 14.1Z" fill="#4b9bc1"/><rect x="3.6" y="17.8" width="3.4" height="1.4" rx="0.7" fill="#a9b94b"/><rect x="8" y="17.8" width="5.6" height="1.4" rx="0.7" fill="#a9b94b"/></svg>
<div class="t" style="left:273px;top:814.34px;font-size:12px;letter-spacing:-0.503px;">Series</div>
<div class="tb" style="left:318px;top:803px;width:189px;height:32px"></div>
<svg style="left:326px;top:807px" width="24" height="24" viewBox="0 0 24 24"><path fill-rule="evenodd" fill="#a9a9a9" d="M21.62 10.66 L23.96 10.87 L23.96 12.93 L21.62 13.14 L21.21 14.96 L23.22 16.16 L22.32 18.02 L20.13 17.19 L18.97 18.65 L20.26 20.6 L18.65 21.89 L17.03 20.19 L15.35 21 L15.67 23.33 L13.65 23.79 L12.93 21.56 L11.07 21.56 L10.35 23.79 L8.33 23.33 L8.65 21 L6.97 20.19 L5.35 21.89 L3.74 20.6 L5.03 18.65 L3.87 17.19 L1.68 18.02 L0.78 16.16 L2.79 14.96 L2.38 13.14 L0.04 12.93 L0.04 10.87 L2.38 10.66 L2.79 8.84 L0.78 7.64 L1.68 5.78 L3.87 6.61 L5.03 5.15 L3.74 3.2 L5.35 1.91 L6.97 3.61 L8.65 2.8 L8.33 0.47 L10.35 0.01 L11.07 2.24 L12.93 2.24 L13.65 0.01 L15.67 0.47 L15.35 2.8 L17.03 3.61 L18.65 1.91 L20.26 3.2 L18.97 5.15 L20.13 6.61 L22.32 5.78 L23.22 7.64 L21.21 8.84ZM5.1 11.9a6.9 6.9 0 1 0 13.8 0a6.9 6.9 0 1 0 -13.8 0Z"/><path d="M12 11.9L18.97 14.06" stroke="#a9a9a9" stroke-width="1.68"/><path d="M12 11.9L12.1 19.2" stroke="#a9a9a9" stroke-width="1.68"/><path d="M12 11.9L5.09 14.25" stroke="#a9a9a9" stroke-width="1.68"/><path d="M12 11.9L7.63 6.06" stroke="#a9a9a9" stroke-width="1.68"/><path d="M12 11.9L16.21 5.93" stroke="#a9a9a9" stroke-width="1.68"/><path fill-rule="evenodd" fill="#a9a9a9" d="M8.7 11.9a3.3 3.3 0 1 0 6.6 0a3.3 3.3 0 1 0 -6.6 0ZM10.3 11.9a1.7 1.7 0 1 0 3.4 0a1.7 1.7 0 1 0 -3.4 0Z"/></svg>
<div class="t" style="left:356px;top:814.34px;font-size:12px;letter-spacing:0.182px;">Automated file distribution</div>
<div class="tb" style="left:513px;top:803px;width:127px;height:32px"></div>
<svg style="left:521px;top:807px" width="24" height="24" viewBox="0 0 24 24"><rect x="5.7" y="0" width="18.3" height="6" rx="3" fill="#000"/><circle cx="16.7" cy="3" r="1.45" fill="#5cc9f1"/><rect x="19" y="1.5" width="3" height="3" fill="#f7c440"/><rect x="5.7" y="9" width="18.3" height="6" rx="3" fill="#000"/><circle cx="16.7" cy="12" r="1.45" fill="#5cc9f1"/><rect x="19" y="10.5" width="3" height="3" fill="#f7c440"/><rect x="5.7" y="18" width="18.3" height="6" rx="3" fill="#000"/><circle cx="16.7" cy="21" r="1.45" fill="#5cc9f1"/><rect x="19" y="19.5" width="3" height="3" fill="#f7c440"/><rect x="8" y="6.9" width="14" height="1.5" fill="#8f8f8f"/><rect x="8" y="15.7" width="14" height="1.5" fill="#8f8f8f"/><circle cx="6.1" cy="18" r="6.1" fill="#2442ef"/><path d="M6.8 13.6Q10 13 11.4 15.6L11.2 18.4L9.4 19.4L9 22.2L7.4 22.8L6.6 19.2L5.6 17.4L7.4 16Z" fill="#fff"/><path d="M0.6 16.2L3.4 14L3 16.4Z" fill="#fff"/><path d="M1.2 20.4L4 21.2L3.8 23.2Q2 22.4 1.2 20.4Z" fill="#fff"/></svg>
<div class="t" style="left:551px;top:814.34px;font-size:12px;letter-spacing:-0.247px;">Storage servers</div>
<div class="tb" style="left:645px;top:803px;width:115px;height:32px"></div>
<svg style="left:655.75px;top:807.4px" width="18" height="24" viewBox="0 0 18 24"><path d="M0.4 1.4Q0.4 0.3 1.5 0.3H10.2V7.9H17.8V22.8Q17.8 23.9 16.7 23.9H1.5Q0.4 23.9 0.4 22.8Z" fill="#fff"/><path d="M11.6 0.4L17.7 6.6H11.6Z" fill="#fff"/><path fill="#c17623" d="M2.8 21.4Q2.8 19.17 6.45 18.33L8.8 20.34L11.15 18.33Q14.8 19.17 14.8 21.4Q8.8 22.3 2.8 21.4Z"/><path fill="#f2ba70" d="M6.95 15.92H10.65V18.66Q8.8 21.24 6.95 18.66Z"/><ellipse cx="5.89" cy="13.85" rx="0.62" ry="1.06" fill="#f2ba70"/><ellipse cx="11.71" cy="13.85" rx="0.62" ry="1.06" fill="#f2ba70"/><path fill="#f2ba70" d="M6 11.44H11.6V14.24Q11.6 16.76 9.92 17.88H7.68Q6 16.76 6 14.24Z"/><path fill="#a9681f" d="M5.72 14.24Q5.16 9.14 8.8 9.2Q12.44 9.14 11.88 14.24L11.04 13.79L11.1 12.22Q8.8 11.05 6.5 12.22L6.56 13.79Z"/></svg>
<div class="t" style="left:683px;top:814.34px;font-size:12px;letter-spacing:0.079px;">Content type</div>
<div class="tb" style="left:766px;top:803px;width:163px;height:32px"></div>
<svg style="left:774px;top:807px" width="24" height="24" viewBox="0 0 24 24"><path d="M2.2 1.6Q5.6 0.6 6.4 3.6L11.2 19.6" fill="none" stroke="#8f8f8f" stroke-width="2.4" stroke-linecap="round"/><path d="M11.4 20.4L23.4 16.6" stroke="#8f8f8f" stroke-width="2.2" stroke-linecap="round"/><path d="M7.9 4.6L14.2 1.1L18.7 8L11.9 11.5Z" fill="#5cbee5"/><path d="M10.9 12.3L19.6 8.9L21.9 15.5L14.5 18.2Z" fill="#f7c440"/><circle cx="12.1" cy="20.1" r="2.9" fill="#2c3440"/><circle cx="12.1" cy="20.1" r="2.1" fill="#f7c440"/></svg>
<div class="t" style="left:804px;top:814.34px;font-size:12px;letter-spacing:-0.075px;">Delivery specifications</div>
<div class="tb" style="left:935px;top:803px;width:99px;height:32px"></div>
<svg style="left:943px;top:807px" width="24" height="24" viewBox="0 0 24 24"><path d="M12.2 5V6.5M5.6 8V6.5H18.6V8M5.6 11.6V12.6M2.6 14V12.6H8.6V14M18.6 11.6V13" fill="none" stroke="#9a9a9a" stroke-width="0.9"/><rect x="9.5" y="1" width="5.4" height="4" fill="#f7ba31"/><rect x="3" y="8" width="5.2" height="3.6" fill="#f7ba31"/><rect x="16" y="8" width="5.2" height="3.6" fill="#f7ba31"/><rect x="0" y="14" width="5" height="3.6" fill="#f7ba31"/><rect x="6" y="14" width="5" height="3.6" fill="#f7ba31"/><rect x="21" y="13.5" width="3" height="3" fill="#f7ba31"/><rect x="10.5" y="20" width="5" height="3.2" fill="#f7ba31"/><path fill-rule="evenodd" fill="#a9a9a9" d="M22.94 17.15 L24.27 17.27 L24.27 18.53 L22.94 18.65 L22.65 19.73 L23.74 20.49 L23.11 21.58 L21.91 21.02 L21.12 21.81 L21.68 23.01 L20.59 23.64 L19.83 22.55 L18.75 22.84 L18.63 24.17 L17.37 24.17 L17.25 22.84 L16.17 22.55 L15.41 23.64 L14.32 23.01 L14.88 21.81 L14.09 21.02 L12.89 21.58 L12.26 20.49 L13.35 19.73 L13.06 18.65 L11.73 18.53 L11.73 17.27 L13.06 17.15 L13.35 16.07 L12.26 15.31 L12.89 14.22 L14.09 14.78 L14.88 13.99 L14.32 12.79 L15.41 12.16 L16.17 13.25 L17.25 12.96 L17.37 11.63 L18.63 11.63 L18.75 12.96 L19.83 13.25 L20.59 12.16 L21.68 12.79 L21.12 13.99 L21.91 14.78 L23.11 14.22 L23.74 15.31 L22.65 16.07ZM14.6 17.9a3.4 3.4 0 1 0 6.8 0a3.4 3.4 0 1 0 -6.8 0Z"/><circle cx="18" cy="17.9" r="3.4" fill="#4a4438"/><circle cx="16.6" cy="16" r="0.8" fill="#f7ba31"/><circle cx="20.2" cy="16.8" r="0.8" fill="#f7ba31"/><circle cx="17" cy="20.4" r="0.8" fill="#f7ba31"/><circle cx="19.4" cy="20.4" r="0.8" fill="#f7ba31"/><circle cx="15.4" cy="17.6" r="0.6" fill="#f7ba31"/></svg>
<div class="t" style="left:973px;top:814.34px;font-size:12px;letter-spacing:-0.189px;">Templates</div>
<div class="tb" style="left:1040px;top:803px;width:92px;height:32px"></div>
<svg style="left:1048px;top:807px" width="24" height="24" viewBox="0 0 24 24"><rect x="6.6" y="0" width="11.6" height="11.9" rx="1.6" fill="#cfa95d"/><rect x="11.299999999999999" y="0" width="2.2" height="3.9" fill="#b78832"/><rect x="8.0" y="8.3" width="3" height="1.9" fill="#b9bac9"/><rect x="0.2" y="12.1" width="11.6" height="11.9" rx="1.6" fill="#cfa95d"/><rect x="4.9" y="12.1" width="2.2" height="3.9" fill="#b78832"/><rect x="1.5999999999999999" y="20.4" width="3" height="1.9" fill="#b9bac9"/><rect x="12.4" y="12.1" width="11.6" height="11.9" rx="1.6" fill="#cfa95d"/><rect x="17.099999999999998" y="12.1" width="2.2" height="3.9" fill="#b78832"/><rect x="13.8" y="20.4" width="3" height="1.9" fill="#b9bac9"/></svg>
<div class="t" style="left:1078px;top:814.34px;font-size:12px;letter-spacing:-0.170px;">Products</div>
<div class="tb" style="left:1138px;top:803px;width:77px;height:32px"></div>
<svg style="left:1146px;top:806px" width="24" height="26" viewBox="0 0 24 26"><path d="M4 7H19.5M4 12.4H19.5M4 18H19.5" stroke="#a8790f" stroke-width="0.9"/><rect x="1.4" y="0.8" width="2.7" height="24" fill="#c98b53"/><rect x="19.3" y="0.8" width="2.8" height="20" fill="#c98b53"/><rect x="0" y="22.6" width="24" height="2.5" rx="1.2" fill="#c98b53"/><g fill="#5cc9f1"><rect x="6" y="4.9" width="2.6" height="4.2" rx="1"/><rect x="9.2" y="4.9" width="2.6" height="4.2" rx="1"/><rect x="15" y="4.9" width="3" height="4.2" rx="1"/></g><rect x="6.8" y="10" width="2.6" height="4.8" rx="1.2" fill="#f7c93b"/><g fill="#9a9aa1"><rect x="5.4" y="15.8" width="2.4" height="4.4" rx="1"/><rect x="8.4" y="15.8" width="2.4" height="4.4" rx="1"/></g><path fill="#c17623" d="M7.6 24.6Q7.6 20.57 12.39 19.46L15.5 22.13L18.61 19.46Q23.4 20.57 23.4 24.6Q15.5 25.78 7.6 24.6Z"/><path fill="#f2be7c" d="M13.06 16.28H17.94V19.91Q15.5 23.31 13.06 19.91Z"/><ellipse cx="11.65" cy="13.54" rx="0.81" ry="1.41" fill="#f2be7c"/><ellipse cx="19.35" cy="13.54" rx="0.81" ry="1.41" fill="#f2be7c"/><path fill="#f2be7c" d="M11.8 10.36H19.2V14.06Q19.2 17.39 16.98 18.87H14.02Q11.8 17.39 11.8 14.06Z"/><path fill="#a9681f" d="M11.43 14.06Q10.69 7.33 15.5 7.4Q20.31 7.33 19.57 14.06L18.46 13.47L18.53 11.4Q15.5 9.84 12.47 11.4L12.54 13.47Z"/></svg>
<div class="t" style="left:1176px;top:814.34px;font-size:12px;letter-spacing:-0.391px;">Prices</div>
<div class="tb" style="left:1221px;top:803px;width:95px;height:32px"></div>
<svg style="left:1229px;top:806px" width="24" height="26" viewBox="0 0 24 26"><path d="M4 7H19.5M4 12.4H19.5M4 18H19.5" stroke="#a8790f" stroke-width="0.9"/><rect x="1.4" y="0.8" width="2.7" height="24" fill="#c98b53"/><rect x="19.3" y="0.8" width="2.8" height="20" fill="#c98b53"/><rect x="0" y="22.6" width="24" height="2.5" rx="1.2" fill="#c98b53"/><g fill="#5cc9f1"><rect x="6" y="4.9" width="2.6" height="4.2" rx="1"/><rect x="9.2" y="4.9" width="2.6" height="4.2" rx="1"/><rect x="15" y="4.9" width="3" height="4.2" rx="1"/></g><rect x="6.8" y="10" width="2.6" height="4.8" rx="1.2" fill="#f7c93b"/><g fill="#9a9aa1"><rect x="5.4" y="15.8" width="2.4" height="4.4" rx="1"/><rect x="8.4" y="15.8" width="2.4" height="4.4" rx="1"/></g><path fill="#c17623" d="M7.6 24.6Q7.6 20.57 12.39 19.46L15.5 22.13L18.61 19.46Q23.4 20.57 23.4 24.6Q15.5 25.78 7.6 24.6Z"/><path fill="#f2be7c" d="M13.06 16.28H17.94V19.91Q15.5 23.31 13.06 19.91Z"/><ellipse cx="11.65" cy="13.54" rx="0.81" ry="1.41" fill="#f2be7c"/><ellipse cx="19.35" cy="13.54" rx="0.81" ry="1.41" fill="#f2be7c"/><path fill="#f2be7c" d="M11.8 10.36H19.2V14.06Q19.2 17.39 16.98 18.87H14.02Q11.8 17.39 11.8 14.06Z"/><path fill="#a9681f" d="M11.43 14.06Q10.69 7.33 15.5 7.4Q20.31 7.33 19.57 14.06L18.46 13.47L18.53 11.4Q15.5 9.84 12.47 11.4L12.54 13.47Z"/></svg>
<div class="t" style="left:1259px;top:814.34px;font-size:12px;letter-spacing:-0.213px;">Price lists</div>
<div class="tb" style="left:1322px;top:803px;width:88px;height:32px"></div>
<svg style="left:1330px;top:807px" width="24" height="24" viewBox="0 0 24 24"><path d="M2.8 9.1L11.7 5L8.1 1.6L-0.2 6.5Z" fill="#f1c98f"/><path d="M21.3 9.1L11.7 5L15.7 1.6L24.1 6.5Z" fill="#efc589"/><path d="M2.8 9.1L4 6.2L8.3 2.7L11.7 5.3L15.4 2.7L19.9 6.2L21.3 9.1L11.7 14.5Z" fill="#d4ac5e"/><path d="M8.3 5.2V7.6M16.2 4.6V6.8" stroke="#9a6e20" stroke-width="1.1"/><rect x="13.2" y="9.3" width="1.9" height="1.8" fill="#b9bac9"/><rect x="5.6" y="11" width="1.3" height="0.9" fill="#d9dae6"/><path d="M11.7 12.2L10.4 13.6L11.7 14.5L13.6 13.4Z" fill="#c98a45"/><path d="M2.8 14.3L8.2 17.3L11.7 14.5V22.3L2.8 17.2Z" fill="#d99949"/><path d="M21.3 14.3L15.2 17.3L11.7 14.5V22.3L21.3 17.2Z" fill="#b97b31"/><path d="M2.8 9.1L11.7 14.5L8.2 17.3L-0.2 12.7Z" fill="#f1c98f"/><path d="M21.3 9.1L11.7 14.5L15.2 17.3L24.1 12.7Z" fill="#eec284"/></svg>
<div class="t" style="left:1360px;top:814.34px;font-size:12px;letter-spacing:-0.170px;">Projects</div>
<div class="tb" style="left:1415.5px;top:803px;width:135.5px;height:32px"></div>
<svg style="left:1423.5px;top:807px" width="24" height="24" viewBox="0 0 24 24"><rect x="0.4" y="3.8" width="22.3" height="17.3" rx="2" fill="#fff"/><rect x="1.8" y="5" width="8" height="9.2" fill="#e9e9e9"/><path d="M5.6 5.6Q7.9 5.6 7.9 8Q7.9 9.6 7 10.4V11.2L9.6 12.6V13.7H1.8V12.6L4.3 11.2V10.4Q3.4 9.6 3.4 8Q3.4 5.6 5.6 5.6Z" fill="#000"/><path d="M4.4 21.1L5.2 18L6.2 19.2V21.1Z" fill="#000"/><rect x="11.6" y="6.2" width="9.8" height="1.3" fill="#e4e4e4"/><rect x="11.6" y="8.4" width="9.8" height="1.3" fill="#e4e4e4"/><rect x="11.6" y="10.6" width="9.8" height="1.3" fill="#e4e4e4"/><rect x="11.6" y="16.6" width="6.2" height="7.4" fill="#f4cd45"/><rect x="17.6" y="15.6" width="6" height="8.4" fill="#f6d457"/><path d="M11.6 19H23.6M11.6 21.4H23.6M17.6 17.4H23.6" stroke="#e3b52e" stroke-width="0.6"/><circle cx="20.2" cy="13.3" r="3" fill="#f7d65c" stroke="#e3b52e" stroke-width="0.8"/></svg>
<div class="t" style="left:1453.5px;top:814.34px;font-size:12px;letter-spacing:-0.071px;">Billing customers</div>
<div class="tb" style="left:1557px;top:803px;width:177px;height:32px"></div>
<svg style="left:1565px;top:807px" width="24" height="24" viewBox="0 0 24 24"><path d="M4.7 5.6V4.7A3.6 3.6 0 0 1 8.3 1.1H19.5A3.6 3.6 0 0 1 23.1 4.7V14.6A3.6 3.6 0 0 1 20.3 18.1" fill="none" stroke="#8b8d91" stroke-width="1.8"/><rect x="0.9" y="5.9" width="18.9" height="16.2" rx="3.6" fill="none" stroke="#8b8d91" stroke-width="1.8"/><circle cx="9.9" cy="11.9" r="3.5" fill="#0d0d0d" stroke="#d4a12b" stroke-width="1.3"/><path d="M8.8 9.7L11.7 11.9L8.8 14.1Z" fill="#4b9bc1"/><rect x="3.6" y="17.8" width="3.4" height="1.4" rx="0.7" fill="#a9b94b"/><rect x="8" y="17.8" width="5.6" height="1.4" rx="0.7" fill="#a9b94b"/></svg>
<div class="t" style="left:1595px;top:814.34px;font-size:12px;letter-spacing:-0.018px;">PO terms and conditions</div>
<div class="tb" style="left:1740px;top:803px;width:84px;height:32px"></div>
<svg style="left:1748px;top:807px" width="24" height="24" viewBox="0 0 24 24"><path d="M7 1.4H17L13.4 6.6H10.6Z" fill="#f7c440" stroke="#8c8c8c" stroke-width="0.9" stroke-linejoin="round"/><path d="M10.4 6.8H13.6Q20.6 13 20.6 19Q20.6 23.4 16.4 23.4H7.6Q3.4 23.4 3.4 19Q3.4 13 10.4 6.8Z" fill="#fff" stroke="#8c8c8c" stroke-width="1.1"/><path d="M10.8 8.8H13.2Q19.2 14.2 19.2 19Q19.2 21.6 16.4 21.6H7.6Q4.8 21.6 4.8 19Q4.8 14.2 10.8 8.8Z" fill="#60c1e7"/><path d="M5.2 15.4H8.6M4.9 17.2H8.2M5.2 19H8" stroke="#fff" stroke-width="0.7"/><text x="12.3" y="19.3" font-size="9.2" font-weight="700" text-anchor="middle" fill="#000" font-family="Liberation Sans, sans-serif">$</text></svg>
<div class="t" style="left:1778px;top:814.34px;font-size:12px;letter-spacing:-0.008px;">Budget</div>
<div class="tb" style="left:49px;top:837px;width:119px;height:32px"></div>
<svg style="left:57px;top:841px" width="24" height="24" viewBox="0 0 24 24"><path d="M3 3.6Q3 2.2 4.4 2.2H11.6Q12.8 2.2 13.2 3.4L13.8 5.2H22.6Q24 5.2 24 6.6V17.4Q24 18.8 22.6 18.8H3Z" fill="#f0d77c"/><path d="M0 6.4Q0 5 1.4 5H9.6Q10.8 5 11.4 6L12.6 8.4H20.6Q22 8.4 22 9.8V22.6Q22 24 20.6 24H1.4Q0 24 0 22.6Z" fill="#f0d77c" stroke="#2b2b28" stroke-width="0.7"/><path d="M0.3 11.4H21.7" stroke="#b59f52" stroke-width="0.8"/><path d="M4.9 17.6C7.6 13.5 14.6 13.5 17.3 17.6C14.6 21.7 7.6 21.7 4.9 17.6Z" fill="#f0d77c" stroke="#000" stroke-width="1.25"/><circle cx="11.1" cy="17.2" r="2.8" fill="#000"/><circle cx="10" cy="16" r="0.75" fill="#a8a8a8"/></svg>
<div class="t" style="left:87px;top:848.34px;font-size:12px;letter-spacing:0.006px;">Watch folders</div>
<div class="tb" style="left:174px;top:837px;width:109px;height:32px"></div>
<svg style="left:182px;top:841px" width="24" height="24" viewBox="0 0 24 24"><path d="M12 8H15.6Q15.2 5.6 16.8 5.6Q18.4 5.6 18 8H21V11.6Q24 11 24 12.8Q24 14.6 21 14V17.5H18Q18.4 15.4 16.8 15.4Q15.2 15.4 15.6 17.5H12Z" fill="#5cbee5"/><path d="M2.5 8H6Q5.4 5.2 7.2 5.2Q9 5.2 8.4 8H12V11.6Q14.6 11 14.6 12.8Q14.6 14.6 12 14V17.5H8.4Q9 20.2 7.2 20.2Q5.4 20.2 6 17.5H2.5V14Q0 14.6 0 12.8Q0 11 2.5 11.6Z" fill="#f7c440"/></svg>
<div class="t" style="left:212px;top:848.34px;font-size:12px;letter-spacing:-0.254px;">External API</div>
<div class="tb" style="left:288px;top:837px;width:111px;height:32px"></div>
<svg style="left:296px;top:841px" width="24" height="24" viewBox="0 0 24 24"><g fill="none" stroke="#a7a7a7" stroke-width="1.9" stroke-linecap="round"><path d="M11.8 8.6L12 6.4Q12.6 3.4 15.4 1.8Q19 0.2 21.6 3.2Q23.6 6 22 9Q20.4 12 18 13Q16.4 13.6 15.2 13.2"/><path d="M8.8 11Q6.6 10.6 4.6 12Q1.4 14.2 1 17.4Q0.8 21.2 4.2 22.8Q7.4 23.8 10 21.2Q12.4 18.8 12.2 15.6"/><path d="M7.6 16.2L16.2 7.8"/></g></svg>
<div class="t" style="left:326px;top:848.34px;font-size:12px;letter-spacing:-0.419px;">Access Links</div>
<div class="tb" style="left:405px;top:837px;width:180px;height:32px"></div>
<svg style="left:412.5px;top:840px" width="26" height="22" viewBox="0 0 26 22"><rect x="1.6" y="4.8" width="23" height="16.4" rx="2.6" fill="none" stroke="#5bb5da" stroke-width="1.6"/><path d="M3.2 7.2L23.2 19.6M3.2 19.6L12.2 13.4" fill="none" stroke="#f1c232" stroke-width="1.35"/><path d="M11.9 15.9L12.27 12.13L19.22 4.68L22.58 7.82L15.63 15.27Z" fill="#f5913a"/><path d="M12.27 12.13L19.22 4.68L20.4 5.78L13.45 13.23Z" fill="#efc22f"/><path d="M19.22 4.68L21.12 2.63L24.48 5.77L22.58 7.82Z" fill="#cfcfcf"/><path d="M21.12 2.63L22.1 1.6Q22.9 0.9 23.7 1.6L25.5 3.3Q26.2 4.1 25.5 4.8L24.48 5.77Z" fill="#f79a4a"/></svg>
<div class="t" style="left:443px;top:848.34px;font-size:12px;letter-spacing:-0.207px;">Standard email messages</div>
<div class="tb" style="left:591px;top:837px;width:175px;height:32px"></div>
<svg style="left:600.1px;top:841.25px" width="24" height="24" viewBox="0 0 24 24"><path d="M4.2 5.6Q1.6 8.6 1.9 12.4" fill="none" stroke="#111" stroke-width="0.9"/><path d="M0.6 11.6L3.3 11.9L2 14.2Z" fill="#111"/><path d="M13.8 3.6Q16.9 5.3 18.6 8.6" fill="none" stroke="#111" stroke-width="0.9"/><path d="M12.9 2.3L15.8 2.8L14 5.2Z" fill="#111"/><path d="M9.6 21.7Q13 22.6 15.6 20.4" fill="none" stroke="#111" stroke-width="0.9"/><path d="M14.3 18.7L17.1 19.6L15.7 22Z" fill="#111"/><path fill-rule="evenodd" fill="#0c0c0c" d="M12.84 11.99 L13.66 12.03 L13.66 12.97 L12.84 13.01 L12.55 13.72 L13.1 14.34 L12.44 15 L11.82 14.45 L11.11 14.74 L11.07 15.56 L10.13 15.56 L10.09 14.74 L9.38 14.45 L8.76 15 L8.1 14.34 L8.65 13.72 L8.36 13.01 L7.54 12.97 L7.54 12.03 L8.36 11.99 L8.65 11.28 L8.1 10.66 L8.76 10 L9.38 10.55 L10.09 10.26 L10.13 9.44 L11.07 9.44 L11.11 10.26 L11.82 10.55 L12.44 10 L13.1 10.66 L12.55 11.28ZM9.6 12.5a1 1 0 1 0 2 0a1 1 0 1 0 -2 0Z"/><circle cx="8" cy="4.7" r="4.3" fill="#fccb45"/><text x="8" y="7.1" font-size="6.6" font-weight="700" text-anchor="middle" fill="#4a3a08" font-family="Liberation Sans, sans-serif">$</text><circle cx="18.2" cy="14.5" r="4.3" fill="#62c6ef"/><text x="18.2" y="17" font-size="6.8" font-weight="700" text-anchor="middle" fill="#163848" font-family="Liberation Sans, sans-serif">£</text><circle cx="4.8" cy="19.1" r="4.2" fill="#8f9196"/><text x="4.6" y="21.3" font-size="6.2" font-weight="700" text-anchor="middle" fill="#63656a" font-family="Liberation Sans, sans-serif">€</text></svg>
<div class="t" style="left:629px;top:848.34px;font-size:12px;letter-spacing:-0.109px;">Customer exchange rate</div>
<div class="tb" style="left:771px;top:837px;width:157px;height:32px"></div>
<svg style="left:779px;top:841px" width="24" height="24" viewBox="0 0 24 24"><rect x="0.6" y="0.6" width="10.2" height="4.1" rx="0.8" fill="none" stroke="#5cc5ef" stroke-width="1.2"/><circle cx="2.9" cy="2.65" r="0.9" fill="#f7c440"/><rect x="4.4" y="2.2" width="4.8" height="0.9" fill="#9a9a9a"/><rect x="0.6" y="4.7" width="10.2" height="4.1" rx="0.8" fill="none" stroke="#5cc5ef" stroke-width="1.2"/><circle cx="2.9" cy="6.75" r="0.9" fill="#f7c440"/><rect x="4.4" y="6.300000000000001" width="4.8" height="0.9" fill="#9a9a9a"/><rect x="0.6" y="8.8" width="10.2" height="4.1" rx="0.8" fill="none" stroke="#5cc5ef" stroke-width="1.2"/><circle cx="2.9" cy="10.850000000000001" r="0.9" fill="#f7c440"/><rect x="4.4" y="10.4" width="4.8" height="0.9" fill="#9a9a9a"/><circle cx="5.6" cy="18.6" r="4.8" fill="none" stroke="#5cc5ef" stroke-width="1.3"/><path d="M5.6 15.4L8.4 18.6H6.4V21.6H4.8V18.6H2.8Z" fill="#f7c440"/><path fill-rule="evenodd" fill="#a9a9a9" d="M22.85 5.27 L24.27 5.37 L24.27 6.63 L22.85 6.73 L22.56 7.79 L23.74 8.59 L23.11 9.68 L21.83 9.06 L21.06 9.83 L21.68 11.11 L20.59 11.74 L19.79 10.56 L18.73 10.85 L18.63 12.27 L17.37 12.27 L17.27 10.85 L16.21 10.56 L15.41 11.74 L14.32 11.11 L14.94 9.83 L14.17 9.06 L12.89 9.68 L12.26 8.59 L13.44 7.79 L13.15 6.73 L11.73 6.63 L11.73 5.37 L13.15 5.27 L13.44 4.21 L12.26 3.41 L12.89 2.32 L14.17 2.94 L14.94 2.17 L14.32 0.89 L15.41 0.26 L16.21 1.44 L17.27 1.15 L17.37 -0.27 L18.63 -0.27 L18.73 1.15 L19.79 1.44 L20.59 0.26 L21.68 0.89 L21.06 2.17 L21.83 2.94 L23.11 2.32 L23.74 3.41 L22.56 4.21ZM14.9 6a3.1 3.1 0 1 0 6.2 0a3.1 3.1 0 1 0 -6.2 0Z"/><circle cx="18" cy="6" r="1.9" fill="none" stroke="#a9a9a9" stroke-width="0.9"/><rect x="12.9" y="13.2" width="10.3" height="10" fill="#3d9058"/><path d="M15.4 15.2L20.8 21.4M20.8 15.2L15.4 21.4" stroke="#fff" stroke-width="1.6"/></svg>
<div class="t" style="left:809px;top:848.34px;font-size:12px;letter-spacing:0.247px;">Import configuration</div>
<div style="left:38px;top:886.5px;width:76px;height:33px;background:linear-gradient(#323232,#262626);border-radius:4px;box-shadow:0 0 2px rgba(0,0,0,.6);"></div>
<svg style="left:46px;top:890.5px" width="24" height="24" viewBox="0 0 24 24"><circle cx="11.9" cy="12" r="9.9" fill="none" stroke="#da3d37" stroke-width="3.4"/><path d="M5.2 5.4L18.8 18.8" stroke="#da3d37" stroke-width="3.2"/></svg>
<div class="t" style="left:75.5px;top:897.34px;font-size:12px;letter-spacing:-0.237px;">Close</div>
<div style="left:1810px;top:886.5px;width:73px;height:33px;background:linear-gradient(#474747,#404040);border-radius:4px;box-shadow:0 0 2px rgba(0,0,0,.4);"></div>
<svg style="left:1818px;top:891px" width="26" height="22" viewBox="0 0 26 22"><path d="M1.7 12L5.5 8L10.5 13L21.5 2.5L25 6.5L10.3 21Z" fill="#4e9045"/><path d="M1.7 12L5.5 8L10.5 13L21.5 2.5L25 6.5L18 13.4Q12 13.6 7.2 17.6Z" fill="#6a9a61"/></svg>
<div class="t" style="left:1849.5px;top:898.14px;font-size:12px;color:#a6a6a6;letter-spacing:-0.715px;">Save</div>
<div class="t" style="left:836.5px;top:920.96px;font-size:9.5px;font-weight:700;letter-spacing:-0.035px;font-style:normal;">Copyright © 2012 <span style="color:#8a8a8a"><i style="color:#8a8a8a;letter-spacing:-1.3px;font-weight:400">O</i><i style="color:#e8b730;letter-spacing:-1.3px">O</i><i style="color:#4aa3d8;letter-spacing:-0.3px">O</i>NA.NET</span> ltd. All rights reserved.</div>
<div class="t" style="left:836.5px;top:933.96px;font-size:9.5px;color:#a2a2a2;letter-spacing:0.235px;">Copyright © 2012 <span style="color:#6a6a6a"><i style="color:#6a6a6a;letter-spacing:-1.3px;font-weight:400">O</i><i style="color:#a8882a;letter-spacing:-1.3px">O</i><i style="color:#3a7a9c;letter-spacing:-0.3px">O</i>NA.NET</span> ltd. All rights reserved.</div>
</body></html>
